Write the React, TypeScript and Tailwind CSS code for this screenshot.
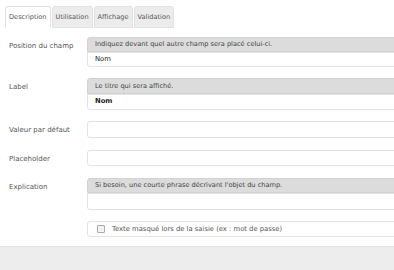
import React from "react";

const TABS = ["Description", "Utilisation", "Affichage", "Validation"];

function Hint({ text }: { text: string }) {
  return (
    <div className="h-[15px] bg-[#dcdcdc] border border-[#d2d2d2] rounded-tl-[3px] pl-[7px] text-[6.6px] leading-[13px] text-[#444]">
      {text}
    </div>
  );
}

function Input({ value, bold, h = "h-[15px]", rounded = "rounded-b-[3px]" }: { value?: string; bold?: boolean; h?: string; rounded?: string }) {
  return (
    <div
      className={`${h} ${rounded} bg-white border border-[#e3e3e3] pl-[7px] text-[6.8px] leading-[13px] text-[#222] ${bold ? "font-bold" : ""}`}
    >
      {value}
    </div>
  );
}

function Row({ label, children, className = "" }: { label?: string; children: React.ReactNode; className?: string }) {
  return (
    <div className={`flex ${className}`}>
      <div className="w-[87px] shrink-0 pl-[9px] pt-[3px] text-[7px] leading-[12px] text-[#555]">{label}</div>
      <div className="w-[320px] shrink-0">{children}</div>
    </div>
  );
}

export default function App() {
  return (
    <div className="w-[394px] h-[270px] overflow-hidden bg-white flex flex-col" style={{ fontFamily: '"DejaVu Sans", Verdana, sans-serif' }}>
      {/* Tabs */}
      <div className="flex gap-[1px] pl-[5px] pt-[6px]">
        {TABS.map((t, i) => (
          <div
            key={t}
            className={`h-[22px] px-[3px] rounded-t-[3px] border border-[#e2e2e2] text-[6.6px] leading-[20px] text-[#555] ${
              i === 0 ? "bg-white border-b-white" : "bg-[#ececec]"
            }`}
          >
            {t}
          </div>
        ))}
      </div>

      {/* Form */}
      <div className="flex flex-col pt-[9px]">
        <Row label="Position du champ">
          <Hint text="Indiquez devant quel autre champ sera placé celui-ci." />
          <Input value="Nom" />
        </Row>
        <Row label="Label" className="mt-[11px]">
          <div className="h-[16px] bg-[#dcdcdc] border border-[#d2d2d2] rounded-tl-[3px] pl-[7px] text-[6.6px] leading-[14px] text-[#444]">
            Le titre qui sera affiché.
          </div>
          <Input value="Nom" bold h="h-[16px]" />
        </Row>
        <Row label="Valeur par défaut" className="mt-[11px]">
          <Input h="h-[17px]" rounded="rounded-[3px]" />
        </Row>
        <Row label="Placeholder" className="mt-[12px]">
          <Input h="h-[16px]" rounded="rounded-[3px]" />
        </Row>
        <Row label="Explication" className="mt-[12px]">
          <Hint text="Si besoin, une courte phrase décrivant l'objet du champ." />
          <Input h="h-[17px]" />
        </Row>
        <Row className="mt-[11px]">
          <div className="h-[16px] flex items-center bg-white border border-[#e3e3e3] rounded-[3px] pl-[9px] gap-[7px]">
            <span className="w-[8px] h-[8px] border border-[#aaa] bg-[#f2f2f2] rounded-[1px]" />
            <span className="text-[6.8px] text-[#555]">Texte masqué lors de la saisie (ex : mot de passe)</span>
          </div>
        </Row>
      </div>

      {/* Footer */}
      <div className="mt-[9px] flex-1 bg-[#ededed] border-t border-[#e2e2e2]" />
    </div>
  );
}
